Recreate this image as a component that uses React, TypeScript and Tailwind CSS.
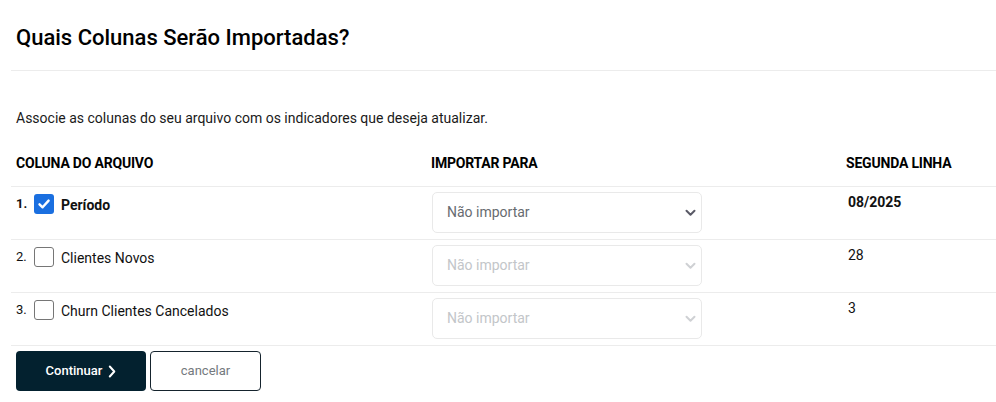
import React from "react";

type RowType = {
  id: number;
  name: string;
  checked: boolean;
  sample: string;
};

const rows: RowType[] = [
  { id: 1, name: "Período", checked: true, sample: "08/2025" },
  { id: 2, name: "Clientes Novos", checked: false, sample: "28" },
  { id: 3, name: "Churn Clientes Cancelados", checked: false, sample: "3" },
];

function Checkbox({ checked }: { checked: boolean }) {
  if (checked) {
    return (
      <span className="flex h-5 w-5 shrink-0 items-center justify-center rounded-[3px] bg-[#1a6fe0]">
        <svg width="14" height="14" viewBox="0 0 14 14" fill="none">
          <path
            d="M2.5 7.3 L5.6 10.3 L11.6 3.6"
            stroke="white"
            strokeWidth="2.4"
            strokeLinecap="round"
            strokeLinejoin="round"
          />
        </svg>
      </span>
    );
  }
  return (
    <span className="block h-5 w-5 shrink-0 rounded-[3px] border border-[#767676] bg-white" />
  );
}

function SelectBox({ active }: { active: boolean }) {
  return (
    <div className="relative h-[41px] w-[270px]">
      <select
        disabled={!active}
        defaultValue=""
        className={`h-full w-full appearance-none rounded-[5px] border border-[#e9e9e9] bg-white pl-[14px] text-[14px] outline-none ${
          active ? "text-[#676b70]" : "text-[#c3c6c9]"
        }`}
      >
        <option value="">Não importar</option>
      </select>
      <svg
        className="pointer-events-none absolute right-[6px] top-[17px]"
        width="11"
        height="8"
        viewBox="0 0 11 8"
        fill="none"
      >
        <path
          d="M1.5 1.8 L5.5 5.8 L9.5 1.8"
          stroke={active ? "#5a5a66" : "#cfd1d4"}
          strokeWidth="2"
          strokeLinecap="round"
          strokeLinejoin="round"
        />
      </svg>
    </div>
  );
}

export default function App() {
  return (
    <div className="min-h-[402px] w-[996px] bg-white font-['Roboto',sans-serif] text-[#111]">
      {/* Title */}
      <div className="pl-4 pt-6 pb-[18px]">
        <h1 className="text-[22px] font-medium leading-7 text-black">
          Quais Colunas Serão Importadas?
        </h1>
      </div>
      <div className="ml-[11px] h-px bg-[#ececec]" />

      <p className="mt-[37px] pl-4 text-[14px] leading-5 text-[#1a1a1a]">
        Associe as colunas do seu arquivo com os indicadores que deseja atualizar.
      </p>

      {/* Table */}
      <div className="ml-[11px] mt-[13px]">
        <div className="grid h-[46px] grid-cols-[415px_415px_1fr] items-center border-b border-[#ececec] pl-[5px] text-[14px] font-bold uppercase tracking-[-0.2px] text-black">
          <span>Coluna do arquivo</span>
          <span>Importar para</span>
          <span>Segunda linha</span>
        </div>

        {rows.map((row) => (
          <div
            key={row.id}
            className="grid h-[53px] grid-cols-[415px_415px_1fr] border-b border-[#ececec] pl-[5px]"
          >
            <div className="flex items-start pt-[7px]">
              <span
                className={`w-[18px] pt-[2px] text-[13px] leading-4 ${
                  row.checked ? "font-bold" : "font-normal"
                }`}
              >
                {row.id}.
              </span>
              <Checkbox checked={row.checked} />
              <span
                className={`ml-[7px] pt-[1px] text-[14px] leading-5 ${
                  row.checked ? "font-bold" : ""
                }`}
              >
                {row.name}
              </span>
            </div>
            <div className="pl-px pt-[5px]">
              <SelectBox active={row.checked} />
            </div>
            <div
              className={`pt-[5px] text-[14px] leading-5 ${
                row.checked ? "font-bold" : ""
              }`}
            >
              <span className="pl-[2px]">{row.sample}</span>
            </div>
          </div>
        ))}
      </div>

      {/* Actions */}
      <div className="mt-[5px] flex gap-1 pl-4">
        <button className="flex h-10 w-[130px] items-center justify-center gap-[6px] rounded bg-[#03212f] text-[13px] font-medium text-white">
          Continuar
          <svg width="8" height="13" viewBox="0 0 8 13" fill="none">
            <path
              d="M1.8 1.5 L6.3 6.5 L1.8 11.5"
              stroke="white"
              strokeWidth="2"
              strokeLinecap="round"
              strokeLinejoin="round"
            />
          </svg>
        </button>
        <button className="h-10 w-[111px] rounded border border-[#15232d] bg-white text-[13px] text-[#74797e]">
          cancelar
        </button>
      </div>
    </div>
  );
}
